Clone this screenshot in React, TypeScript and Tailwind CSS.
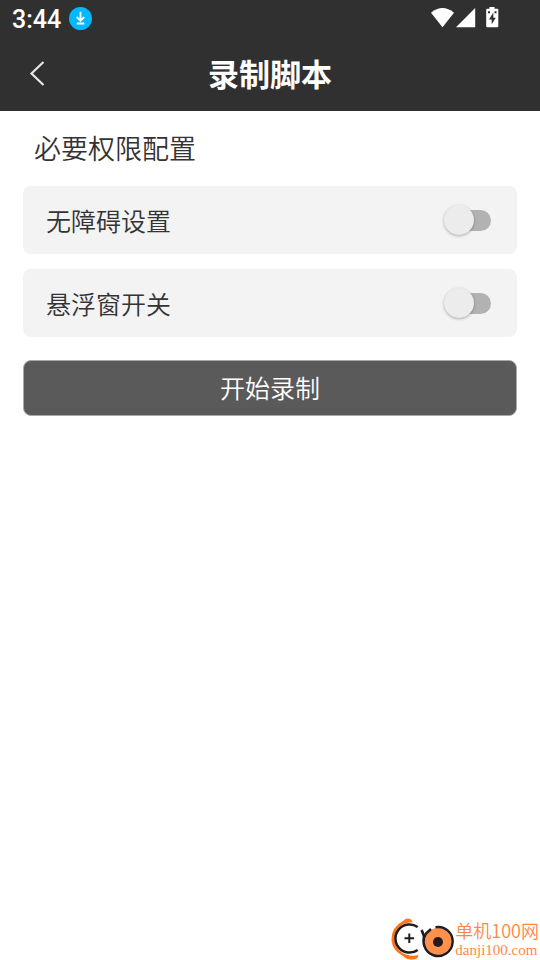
import { useState } from "react";

const permissions = [
  { id: "accessibility", label: "无障碍设置" },
  { id: "overlay", label: "悬浮窗开关" },
];

function StatusBar() {
  return (
    <div className="flex h-[38px] items-center justify-between pl-3 pr-10">
      <div className="flex items-center gap-2">
        <span className="pt-px font-[Roboto,sans-serif] text-[25px] font-medium leading-[38px]">
          3:44
        </span>
        <svg viewBox="0 0 24 24" className="size-6" aria-hidden="true">
          <circle cx="11.5" cy="11.5" r="11.5" fill="#00b8fc" />
          <path
            d="M11.5 4.8v8.6M7.7 10l3.8 3.7 3.8-3.7M7.7 16.5h7.6"
            fill="none"
            stroke="#fff"
            strokeWidth="1.8"
          />
        </svg>
      </div>

      <svg
        viewBox="0 0 70 22"
        className="h-[22px] w-[70px] overflow-visible"
        fill="#fff"
        aria-hidden="true"
      >
        <path d="M1 4.7Q12.5-4.500 24 4.700L12.500 19.200Z" />
        <path d="M45.2 0V19.2H26Z" />
        <path d="M59.5-1h5v1.800h2.800q1 0 1 1v16.400q0 1-1 1H57.200q-1 0-1-1V1.800q0-1 1-1h2.300Z" />
        <path d="M63.300 4.500 59 11.500h2.700v4.800L65.800 9.700h-2.500Z" fill="#303030" />
        <path d="M58 3.200h2v2h-2zM64.500 3.200h2v2h-2z" fill="#303030" />
      </svg>
    </div>
  );
}

function PermissionRow({ id, label }: { id: string; label: string }) {
  const [enabled, setEnabled] = useState(false);

  return (
    <div className="flex h-[68px] items-center justify-between rounded-lg bg-[#f3f3f3] pl-[23px] pr-[26px]">
      <label htmlFor={id} className="text-[25px] leading-9">
        {label}
      </label>
      <input
        id={id}
        type="checkbox"
        role="switch"
        checked={enabled}
        onChange={(e) => setEnabled(e.target.checked)}
        className="flex h-[21px] w-[42px] appearance-none items-center rounded-full bg-[#b2b2b2] before:-ml-[5px] before:size-[30px] before:shrink-0 before:rounded-full before:bg-[#ececec] before:shadow-[0_1px_3px_rgba(0,0,0,0.3)] before:transition-transform checked:bg-sky-400 checked:before:translate-x-[22px]"
      />
    </div>
  );
}

function SiteMark() {
  return (
    <footer className="mt-auto flex items-end justify-end gap-px pr-px text-[#ff8745]">
      <svg
        viewBox="0 0 64 42"
        className="h-[42px] w-16"
        fill="none"
        aria-hidden="true"
      >
        <path
          d="M13 3Q17-1 21 1.500L23 4.200Q12 4 7 11.500Q2.500 20 6.500 28.500Q11 36.500 20 37.500Q25 38 28.500 37Q28 41.500 22 41.500Q16 41.500 13 38Q3 33 1.500 23Q1 9 13 3Z"
          fill="#ff761a"
        />
        <path
          d="M27.700 9A14.100 14.100 0 1 0 27.700 32M31.500 12Q34.500 17 34 23"
          stroke="#231b1d"
          strokeWidth="2.5"
        />
        <path
          d="M19.300 15.500v9.600M14.500 20.300h9.600"
          stroke="#231b1d"
          strokeWidth="2"
        />
        <circle cx="48" cy="23.500" r="13.500" fill="#ff914d" />
        <path
          d="M45.500 9.200A14.500 14.500 0 1 1 36 15.500L41 11"
          stroke="#231b1d"
          strokeWidth="2.5"
        />
        <circle cx="48" cy="24" r="5" fill="#231b1d" />
      </svg>
      <div>
        <p className="text-[18px] leading-5">单机100网</p>
        <p className="font-['Liberation_Serif',serif] text-[15px] leading-5">
          danji100.com
        </p>
      </div>
    </footer>
  );
}

export default function App() {
  return (
    <div className="flex min-h-screen flex-col bg-white font-['Noto_Sans_CJK_SC',sans-serif] font-[350] text-[#333333]">
      <header className="bg-[#303030] text-white">
        <StatusBar />
        <div className="grid h-[73px] grid-cols-[74px_1fr_74px] items-center pb-1">
          <button
            type="button"
            aria-label="返回"
            className="flex h-full items-center justify-center"
          >
            <svg viewBox="0 0 16 26" className="h-[26px] w-4" aria-hidden="true">
              <path
                d="M14.5 2 2.5 13.5 14.5 25"
                fill="none"
                stroke="#e6e6e6"
                strokeWidth="2.2"
              />
            </svg>
          </button>
          <h1 className="text-center text-[31px] font-bold leading-10">
            录制脚本
          </h1>
        </div>
      </header>

      <main className="px-[23px] pt-[17px]">
        <h2 className="px-[11px] text-[27px] leading-10">必要权限配置</h2>

        <div className="mt-[18px] flex flex-col gap-[15px]">
          {permissions.map((item) => (
            <PermissionRow key={item.id} id={item.id} label={item.label} />
          ))}
        </div>

        <button
          type="button"
          className="mt-[23px] h-14 w-full rounded-lg border border-[#a8a8a8] bg-[#5a5a5a] text-[25px] text-white"
        >
          开始录制
        </button>
      </main>

      <SiteMark />
    </div>
  );
}
